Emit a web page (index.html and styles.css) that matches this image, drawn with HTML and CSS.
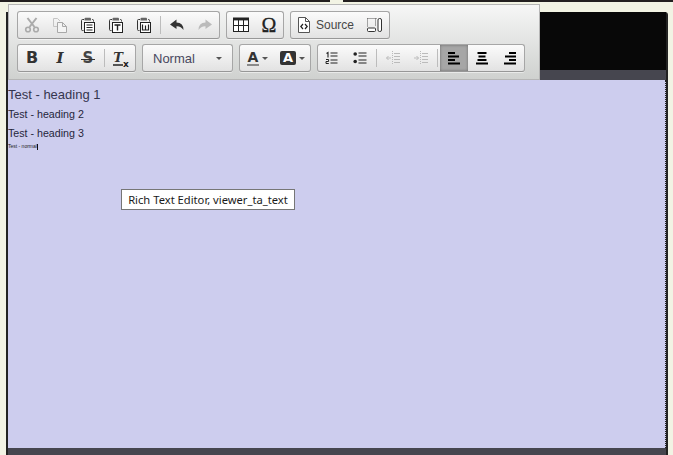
FILE: index.html
```html
<!DOCTYPE html>
<html lang="en">
<head>
<meta charset="utf-8">
<title>Rich Text Editor</title>
<link rel="stylesheet" href="styles.css">
</head>
<body>
<svg class="defs" xmlns="http://www.w3.org/2000/svg">
  <symbol id="i-cut" viewBox="0 0 16 16"><path d="M3.5 1 L10.5 10 M12.5 1 L5.5 10" fill="none" stroke="#aaa" stroke-width="2"/><circle cx="4" cy="12.5" r="2.3" fill="none" stroke="#aaa" stroke-width="1.6"/><circle cx="12" cy="12.5" r="2.3" fill="none" stroke="#aaa" stroke-width="1.6"/></symbol>
  <symbol id="i-copy" viewBox="0 0 16 16"><path d="M6.5 9.5 H1.5 V1.5 H5.5 L8 4" fill="none" stroke="#c4c4c4"/><path d="M5.5 5.5 H10.5 L14.5 9.5 V15.5 H5.5 Z M10.5 5.5 V9.5 H14.5" fill="#f4f4f4" stroke="#a8a8a8"/></symbol>
  <symbol id="i-clip" viewBox="0 0 16 16"><path d="M3.5 13.5 H2.5 Q1.5 13.5 1.5 12.5 V3.5 Q1.5 2.5 2.5 2.5 H4 M12 2.5 H12.5 Q13.5 2.5 13.5 3.5 V4.5" fill="none" stroke="#333"/><path d="M4.5 3.5 V1.8 Q4.5 .8 5.5 .8 H10 Q11 .8 11 1.8 V3.5 Z" fill="#666"/></symbol>
  <symbol id="i-paste" viewBox="0 0 16 16"><use href="#i-clip"/><rect x="4.5" y="5.5" width="10" height="10" fill="#fff" stroke="#222"/><path d="M6.5 8 H12.5 M6.5 10.5 H12.5 M6.5 13 H12.5" stroke="#222" stroke-width="1.2"/></symbol>
  <symbol id="i-paste-t" viewBox="0 0 16 16"><use href="#i-clip"/><rect x="4.5" y="5.5" width="10" height="10" fill="#fff" stroke="#222"/><path d="M6.5 8 H12.5 M9.5 8 V13.5" stroke="#222" stroke-width="1.4"/></symbol>
  <symbol id="i-paste-w" viewBox="0 0 16 16"><use href="#i-clip"/><rect x="4.5" y="5.5" width="10" height="10" fill="#fff" stroke="#222"/><path d="M6.5 7.5 V13 H12.5 V7.5 M9.5 8.5 V13" fill="none" stroke="#222" stroke-width="1.2"/></symbol>
  <symbol id="i-undo" viewBox="0 0 16 16"><path d="M7.5 2.5 L1 7.5 L7.5 12 V9.2 Q12 9 14.5 13 Q14.5 6 7.5 5.6 Z" fill="#333"/></symbol>
  <symbol id="i-redo" viewBox="0 0 16 16"><path d="M8.5 2.5 L15 7.5 L8.5 12 V9.2 Q4 9 1.5 13 Q1.5 6 8.5 5.6 Z" fill="#bbb"/></symbol>
  <symbol id="i-table" viewBox="0 0 16 16"><rect x=".5" y="1" width="15" height="13.5" fill="#fff" stroke="#222"/><rect x="0" y="1" width="16" height="2.4" fill="#222"/><path d="M5.5 3 V14 M10.5 3 V14 M1 8.5 H15" stroke="#222"/></symbol>
  <symbol id="i-source" viewBox="0 0 16 16"><path d="M2.5 .5 H9.5 L13.5 4.5 V15.5 H2.5 Z" fill="#fff" stroke="#555"/><path d="M9.5 .5 V4.5 H13.5" fill="none" stroke="#555"/><path d="M7 7 L4.8 9.5 L7 12 M9 7 L11.2 9.5 L9 12" fill="none" stroke="#222" stroke-width="1.2"/></symbol>
  <symbol id="i-blocks" viewBox="0 0 16 16"><path d="M.5 1.5 H10.5 M.5 1.5 V10 M8.5 1.5 V9" fill="none" stroke="#555" stroke-dasharray="1 1"/><rect x=".5" y="11" width="8" height="3.5" rx="1" fill="#fff" stroke="#333"/><rect x="11" y="1.5" width="3.5" height="13" rx="1.5" fill="#fff" stroke="#333"/></symbol>
  <symbol id="i-ol" viewBox="0 0 16 16"><path d="M2.5 3.5 L4 2.5 V7.5" fill="none" stroke="#222" stroke-width="1.1"/><path d="M2 9.5 H4.6 V11.5 H2 V13.5 H4.8" fill="none" stroke="#222"/><path d="M6.5 3 H13.5 M6.5 6 H13.5 M6.5 10 H13.5 M6.5 13 H13.5" stroke="#222" stroke-width="1.2"/></symbol>
  <symbol id="i-ul" viewBox="0 0 16 16"><circle cx="3.2" cy="4" r="1.8" fill="#222"/><circle cx="3.2" cy="11.5" r="1.8" fill="#222"/><path d="M6.5 3 H14.5 M6.5 6 H14.5 M6.5 10 H14.5 M6.5 13 H14.5" stroke="#222" stroke-width="1.2"/></symbol>
  <symbol id="i-outdent" viewBox="0 0 16 16"><path d="M7.5 1 V15" stroke="#bbb" stroke-dasharray="1 1"/><path d="M9 3.5 H15 M9 6.5 H15 M9 9.5 H15 M9 12.5 H15" stroke="#bbb"/><path d="M6 8 H1.5 M3.5 6 L1.5 8 L3.5 10" fill="none" stroke="#bbb"/></symbol>
  <symbol id="i-indent" viewBox="0 0 16 16"><path d="M7.5 1 V15" stroke="#bbb" stroke-dasharray="1 1"/><path d="M9 3.5 H15 M9 6.5 H15 M9 9.5 H15 M9 12.5 H15" stroke="#bbb"/><path d="M1 8 H5.5 M3.5 6 L5.5 8 L3.5 10" fill="none" stroke="#bbb"/></symbol>
  <symbol id="i-left" viewBox="0 0 16 16"><path d="M2 3 H9 M2 6.5 H13 M2 10 H9 M2 13.5 H14" stroke="#000" stroke-width="1.9"/></symbol>
  <symbol id="i-center" viewBox="0 0 16 16"><path d="M3.5 3 H12.5 M4.5 6.5 H11.5 M3.5 10 H12.5 M2 13.5 H14" stroke="#000" stroke-width="1.9"/></symbol>
  <symbol id="i-right" viewBox="0 0 16 16"><path d="M7 3 H14 M3 6.5 H14 M7 10 H14 M2 13.5 H14" stroke="#000" stroke-width="1.9"/></symbol>
</svg>

<div class="topbar"><div class="strip"></div><div class="notch"></div><div class="strip strip-end"></div></div>

<main class="frame">
  <div class="header"></div>
  <div class="subbar"></div>
  <div class="editor">
    <h1 class="h1">Test - heading 1</h1>
    <h2 class="h2">Test - heading 2</h2>
    <h3 class="h3">Test - heading 3</h3>
    <p class="normal">Test - normal<span class="caret"></span></p>
  </div>
  <div class="footer"></div>
</main>

<div class="toolbar">
  <div class="row">
    <div class="group">
      <span class="btn"><svg class="ico"><use href="#i-cut"/></svg></span>
      <span class="btn"><svg class="ico"><use href="#i-copy"/></svg></span>
      <span class="btn"><svg class="ico"><use href="#i-paste"/></svg></span>
      <span class="btn"><svg class="ico"><use href="#i-paste-t"/></svg></span>
      <span class="btn"><svg class="ico"><use href="#i-paste-w"/></svg></span>
      <span class="sep"></span>
      <span class="btn"><svg class="ico"><use href="#i-undo"/></svg></span>
      <span class="btn"><svg class="ico"><use href="#i-redo"/></svg></span>
    </div>
    <div class="group">
      <span class="btn"><svg class="ico"><use href="#i-table"/></svg></span>
      <span class="btn"><span class="omega">Ω</span></span>
    </div>
    <div class="group">
      <span class="btn btn-source"><svg class="ico"><use href="#i-source"/></svg><span class="label">Source</span></span>
      <span class="btn"><svg class="ico"><use href="#i-blocks"/></svg></span>
    </div>
  </div>
  <div class="row">
    <div class="group">
      <span class="btn"><span class="g-b">B</span></span>
      <span class="btn"><span class="g-i">I</span></span>
      <span class="btn"><span class="g-s">S</span></span>
      <span class="sep"></span>
      <span class="btn"><span class="g-tx"><span class="t">T</span><span class="x">x</span></span></span>
    </div>
    <div class="group combo"><span class="combo-label">Normal</span><span class="arrow"></span></div>
    <div class="group">
      <span class="btn btn-color"><span class="g-a">A</span><span class="arrow"></span></span>
      <span class="btn btn-color"><span class="g-abg">A</span><span class="arrow"></span></span>
    </div>
    <div class="group">
      <span class="btn"><svg class="ico"><use href="#i-ol"/></svg></span>
      <span class="btn"><svg class="ico"><use href="#i-ul"/></svg></span>
      <span class="sep"></span>
      <span class="btn"><svg class="ico"><use href="#i-outdent"/></svg></span>
      <span class="btn"><svg class="ico"><use href="#i-indent"/></svg></span>
      <span class="sep"></span>
      <span class="btn btn-on"><svg class="ico"><use href="#i-left"/></svg></span>
      <span class="btn"><svg class="ico"><use href="#i-center"/></svg></span>
      <span class="btn"><svg class="ico"><use href="#i-right"/></svg></span>
    </div>
  </div>
</div>

<div class="tooltip">Rich Text Editor, viewer_ta_text</div>
</body>
</html>
```
FILE: styles.css
```css
html, body { margin: 0; padding: 0; }
body {
  width: 673px; height: 455px; overflow: hidden; position: relative;
  background: #f2f3e4;
  font-family: "Liberation Sans", Arial, sans-serif;
}
.defs { display: none; }

.topbar { display: flex; height: 2px; }
.strip { flex: 1; background: #231f20; }
.notch { width: 13px; }
.strip-end { flex: 0 0 330px; }

.frame {
  margin: 10px 0 0 6px; width: 658px; height: 443px;
  border-left: 2px solid #222; border-right: 2px solid #222;
  border-top-right-radius: 3px;
  display: flex; flex-direction: column;
}
.header { height: 58px; background: #080808; flex: none; }
.subbar { height: 10px; background: #46464f; flex: none; }
.editor {
  height: 368px; flex: none; box-sizing: border-box;
  background: #cdcdee; color: #26263c;
  border-right: 1px dotted #222;
  display: flex; flex-direction: column; align-items: flex-start;
}
.footer { flex: 1; background: #46464f; }

.h1, .h2, .h3, .normal { margin: 0; font-weight: 400; white-space: nowrap; }
.h1 { font-size: 13px; line-height: 16px; margin-top: 7px; color: #36364e; }
.h2 { font-size: 10.67px; line-height: 14px; margin-top: 4px; }
.h3 { font-size: 10.67px; line-height: 14px; margin-top: 5px; }
.normal { font-size: 5px; line-height: 7px; margin-top: 3px; color: #222; display: flex; align-items: center; }
.caret { width: 1px; height: 6px; background: #111; }

.toolbar {
  position: absolute; left: 8px; top: 4px; width: 532px; height: 76px;
  box-sizing: border-box; padding: 6px 0 0 7px;
  border: 1px solid #b6b6b6;
  background: linear-gradient(#f6f6f6, #cfd1cf);
  display: flex; flex-direction: column; gap: 5px;
}
.row { display: flex; gap: 6px; height: 28px; padding-left: 1px; }
.group {
  display: flex; align-items: stretch; box-sizing: border-box; height: 28px;
  border: 1px solid #a6a6a6; border-bottom-color: #979797; border-radius: 3px;
  background: linear-gradient(#fbfbfb, #e2e2e2);
  box-shadow: 0 1px 0 rgba(255,255,255,.5);
}
.btn { width: 28px; display: flex; align-items: center; justify-content: center; flex: none; color: #333; }
.ico { width: 16px; height: 16px; display: block; }
.sep { width: 5px; flex: none; }
.sep::before { content: ""; display: block; width: 1px; height: 18px; margin: 4px 0 0 2px; background: #bcbcbc; }

.btn-source { width: 70px; justify-content: flex-start; padding-left: 5px; box-sizing: border-box; gap: 4px; }
.label { font-size: 12px; color: #474747; }
.omega { font: 400 20px/1 "Liberation Serif", serif; color: #222; -webkit-text-stroke: .3px #222; }

.g-b { font: 700 16px/1 "DejaVu Sans", sans-serif; color: #333; }
.g-i { font: italic 700 15px/1 "DejaVu Serif", serif; color: #333; }
.g-s { font: 700 15px/1 "DejaVu Sans", sans-serif; color: #444; position: relative; }
.g-s::after { content: ""; position: absolute; left: -2px; right: -2px; top: 8px; height: 1px; background: #333; }
.g-tx { display: flex; align-items: flex-end; }
.t { font: italic 700 13px/1 "DejaVu Serif", serif; color: #333; border-bottom: 2px solid #555; }
.x { font: 700 9px/1 "DejaVu Sans", sans-serif; color: #222; margin-bottom: -3px; }

.combo { width: 91px; padding: 0 10px; align-items: center; justify-content: space-between; }
.combo-label { font-size: 13px; color: #484860; }
.arrow { width: 0; height: 0; border: 3px solid transparent; border-top-color: #555; border-bottom: 0; }

.btn-color { width: 35px; gap: 3px; }
.g-a { font: 700 14px/14px "DejaVu Sans", sans-serif; color: #333; border-bottom: 2px solid #8a8a8a; padding: 0 1px; }
.g-abg { font: 700 13px/14px "DejaVu Sans", sans-serif; color: #fff; background: #333; border-radius: 2px; padding: 0 3px; }

.btn-on { background: #a6a6a6; box-shadow: inset 0 0 3px #6a6a6a; }

.tooltip {
  position: absolute; left: 121px; top: 189px; width: 174px; height: 21px;
  box-sizing: border-box; border: 1px solid #767676; background: #fff; color: #1a1a1a;
  font: 11.2px/19px "Noto Sans", sans-serif; text-align: center; white-space: nowrap;
}
```
